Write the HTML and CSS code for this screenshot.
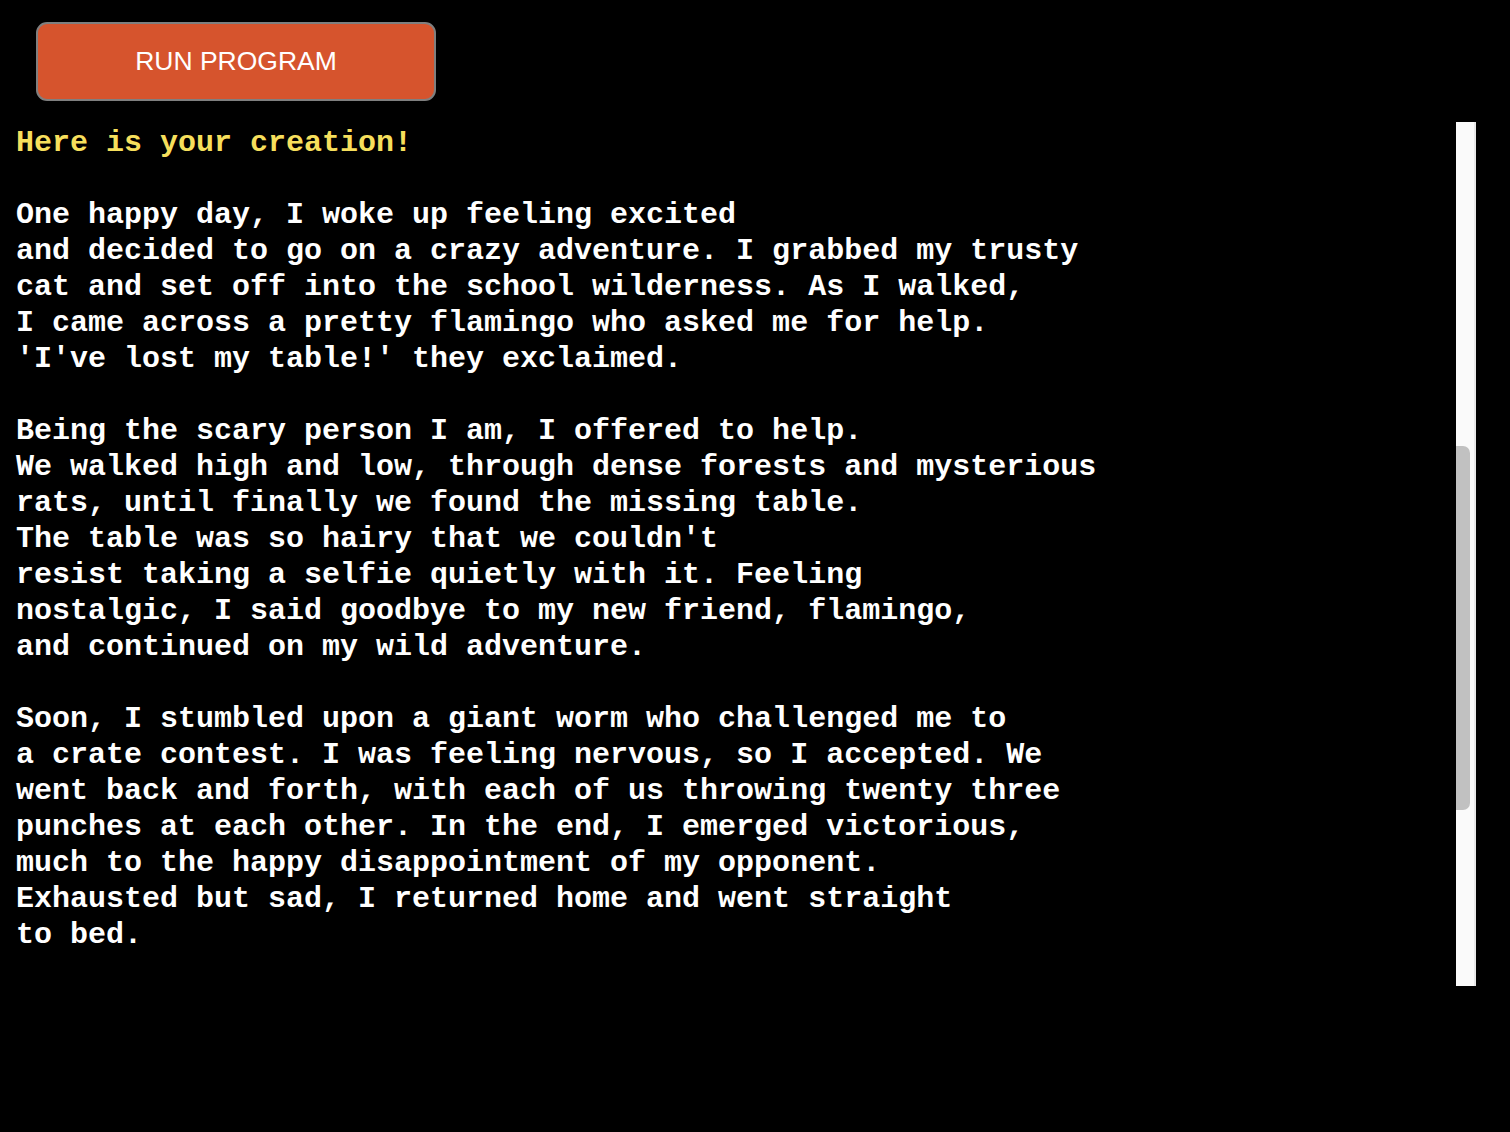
FILE: index.html
```html
<!DOCTYPE html>
<html lang="en">
<head>
<meta charset="utf-8">
<title>Run Program</title>
<link rel="stylesheet" href="styles.css">
</head>
<body>
<div class="toolbar">
  <button class="run-btn" type="button">RUN PROGRAM</button>
</div>
<div class="output">
  <pre class="output-text"><span class="heading">Here is your creation!</span>

One happy day, I woke up feeling excited
and decided to go on a crazy adventure. I grabbed my trusty
cat and set off into the school wilderness. As I walked,
I came across a pretty flamingo who asked me for help.
'I've lost my table!' they exclaimed.

Being the scary person I am, I offered to help.
We walked high and low, through dense forests and mysterious
rats, until finally we found the missing table.
The table was so hairy that we couldn't
resist taking a selfie quietly with it. Feeling
nostalgic, I said goodbye to my new friend, flamingo,
and continued on my wild adventure.

Soon, I stumbled upon a giant worm who challenged me to
a crate contest. I was feeling nervous, so I accepted. We
went back and forth, with each of us throwing twenty three
punches at each other. In the end, I emerged victorious,
much to the happy disappointment of my opponent.
Exhausted but sad, I returned home and went straight
to bed.</pre>
  <div class="scrollbar">
    <div class="thumb"></div>
  </div>
</div>
</body>
</html>
```
FILE: styles.css
```css
html, body {
  margin: 0;
  padding: 0;
  background: #000;
}

body {
  width: 1510px;
  height: 1132px;
  overflow: hidden;
}

.toolbar {
  padding: 22px 0 0 36px;
}

.run-btn {
  display: block;
  width: 400px;
  height: 79px;
  margin: 0;
  padding: 0 0 1px 0;
  background: #d6542d;
  border: 2px solid #7f7f7f;
  border-radius: 11px;
  color: #fff;
  font-family: "Liberation Sans", Arial, sans-serif;
  font-size: 26.5px;
  font-weight: 400;
  line-height: 1;
  text-align: center;
}

.output {
  display: flex;
  align-items: flex-start;
  margin-top: 21px;
  padding-right: 34px;
}

.output-text {
  flex: 1;
  margin: 0;
  padding: 3px 0 0 16px;
  color: #fff;
  font-family: "Liberation Mono", "Courier New", monospace;
  font-weight: 700;
  font-size: 30px;
  line-height: 36px;
  white-space: pre;
}

.heading {
  color: #f6df5c;
}

.scrollbar {
  width: 18px;
  height: 864px;
  background: #fafafa;
  border-right: 2px solid #e8e8e8;
  display: flex;
  flex-direction: column;
}

.thumb {
  margin-top: 324px;
  width: 14px;
  height: 364px;
  background: #c1c1c1;
  border-radius: 0 7px 7px 0;
}
```
